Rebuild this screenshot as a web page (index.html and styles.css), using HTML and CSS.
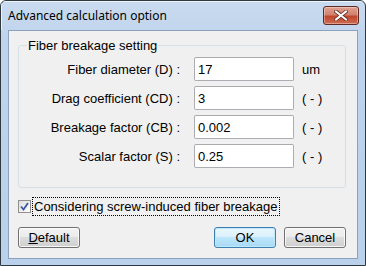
FILE: index.html
```html
<!DOCTYPE html>
<html lang="en">
<head>
  <meta charset="UTF-8" />
  <title>Advanced calculation option</title>
  <link rel="stylesheet" href="styles.css">
</head>
<body>
  <div class="window">
    <div class="titlebar">
      <span class="title">Advanced calculation option</span>
      <button class="close" type="button" aria-label="Close">
        <svg width="14" height="11" viewBox="0 0 14 11">
          <path d="M2 1.5 L12 9.5 M12 1.5 L2 9.5" stroke="#6a2a20" stroke-width="3.6" stroke-linecap="square"/>
          <path d="M2 1.5 L12 9.5 M12 1.5 L2 9.5" stroke="#ffffff" stroke-width="2" stroke-linecap="square"/>
        </svg>
      </button>
    </div>

    <div class="client">
      <fieldset class="group">
        <legend>Fiber breakage setting</legend>
        <div class="field">
          <label for="diam">Fiber diameter (D) :</label>
          <input type="text" id="diam" value="17" />
          <span class="unit">um</span>
        </div>
        <div class="field">
          <label for="drag">Drag coefficient (CD) :</label>
          <input type="text" id="drag" value="3" />
          <span class="unit">( - )</span>
        </div>
        <div class="field">
          <label for="brk">Breakage factor (CB) :</label>
          <input type="text" id="brk" value="0.002" />
          <span class="unit">( - )</span>
        </div>
        <div class="field">
          <label for="scal">Scalar factor (S) :</label>
          <input type="text" id="scal" value="0.25" />
          <span class="unit">( - )</span>
        </div>
      </fieldset>

      <div class="check">
        <span class="box">
          <svg width="9" height="9" viewBox="0 0 9 9">
            <path d="M1 4.5 L3.5 7.5 L8 1" fill="none" stroke="#3c58a8" stroke-width="1.8"/>
          </svg>
        </span>
        <span class="check-text">Considering screw-induced fiber breakage</span>
      </div>

      <div class="buttons">
        <button type="button" class="btn"><u>D</u>efault</button>
        <span class="spacer"></span>
        <button type="button" class="btn primary">OK</button>
        <button type="button" class="btn">Cancel</button>
      </div>
    </div>
  </div>
</body>
</html>
```

FILE: styles.css
```css
html, body {
  margin: 0;
  padding: 0;
  background: #ffffff;
}
.window {
  width: 364px;
  height: 264px;
  border: 1px solid #30393f;
  border-radius: 6px 6px 0 0;
  background: linear-gradient(#c9dbef, #bfd3ec 40px, #b9d1ea);
  display: flex;
  flex-direction: column;
  font-family: "Liberation Sans", Arial, sans-serif;
  font-size: 13px;
  color: #000;
  overflow: hidden;
}
.titlebar {
  height: 29px;
  display: flex;
  align-items: flex-start;
  padding: 0 6px 0 7px;
  box-shadow: inset 1px 1px 0 rgba(255,255,255,0.7);
}
.title {
  font-family: "Noto Sans", "Open Sans", sans-serif;
  font-size: 12px;
  margin-top: 6px;
  flex: 1;
  color: #000;
}
.close {
  width: 36px;
  height: 19px;
  margin-top: 5px;
  padding: 0;
  border: 1px solid #5c2a22;
  border-radius: 3px;
  background: linear-gradient(#e0a193, #d1836f 45%, #c0462c 55%, #cf6c52);
  box-shadow: inset 0 0 0 1px rgba(255,255,255,0.35);
  display: flex;
  align-items: center;
  justify-content: center;
}
.client {
  margin: 0 7px 6px 7px;
  flex: 1;
  background: #f0f0f0;
  border: 1px solid #8aa2bd;
  padding: 7px 11px 0 9px;
  display: flex;
  flex-direction: column;
}
.group {
  margin: 0;
  border: 1px solid #d5dfe5;
  border-radius: 3px;
  padding: 4px 10px 19px 10px;
  display: flex;
  flex-direction: column;
  gap: 5px;
}
.group legend {
  padding: 0 1px;
  margin-left: -2px;
}
.field {
  display: flex;
  align-items: center;
}
.field label {
  width: 151px;
  text-align: right;
}
.field input {
  width: 92px;
  height: 18px;
  margin-left: 14px;
  padding: 2px 3px;
  border: 1px solid #abadb3;
  border-top-color: #aaaaaa;
  border-radius: 2px;
  font-family: "Liberation Sans", Arial, sans-serif;
  font-size: 13px;
  background: #fff;
}
.unit {
  margin-left: 8px;
}
.check {
  display: flex;
  align-items: center;
  margin-top: 9px;
}
.box {
  width: 11px;
  height: 11px;
  border: 1px solid #8f8f8f;
  background: linear-gradient(135deg, #dcdcdc, #ffffff);
  display: flex;
  align-items: center;
  justify-content: center;
}
.check-text {
  margin-left: 1px;
  padding: 1px 1px;
  border: 1px dotted #000;
}
.buttons {
  display: flex;
  margin-top: 11px;
  gap: 8px;
}
.spacer {
  flex: 1;
}
.btn {
  height: 21px;
  padding: 0;
  width: 62px;
  border: 1px solid #707070;
  border-radius: 3px;
  background: linear-gradient(#f2f2f2, #ebebeb 50%, #dddddd 50%, #cfcfcf);
  box-shadow: inset 0 0 0 1px rgba(255,255,255,0.8);
  font-family: "Liberation Sans", Arial, sans-serif;
  font-size: 13px;
  color: #000;
}
.btn.primary {
  border-color: #3c7fb1;
  background: linear-gradient(#eaf6fd, #d9f0fc 50%, #bee6fd 50%, #a7d9f5);
  box-shadow: inset 0 0 0 1px #bfe8fd;
}
```
